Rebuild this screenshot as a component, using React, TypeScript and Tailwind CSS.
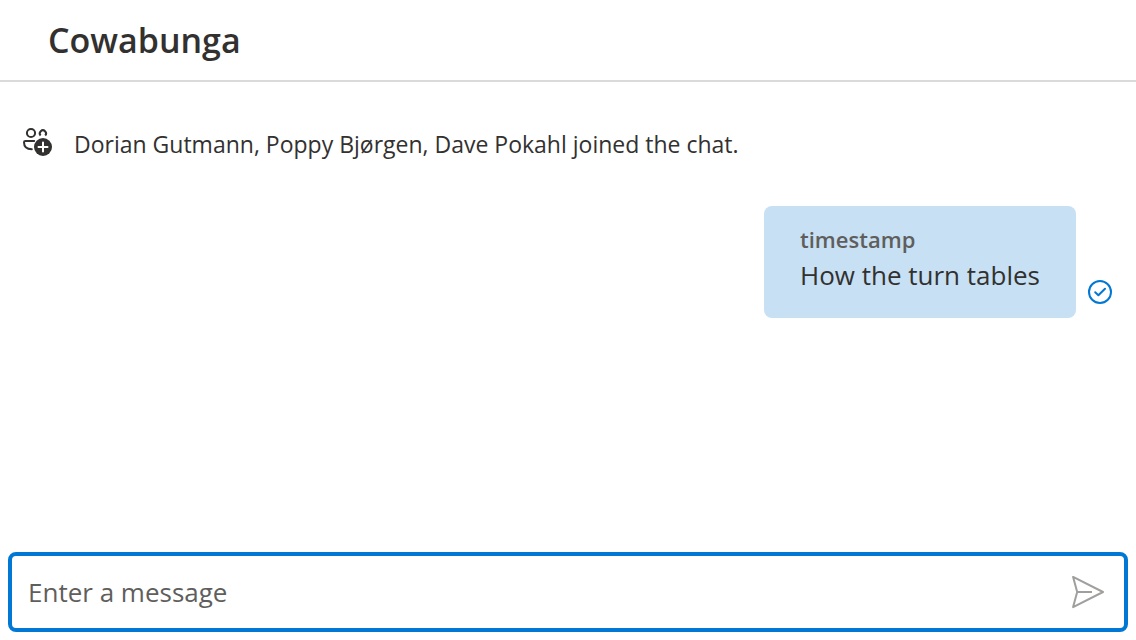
import { useState } from "react";

function PeopleAddIcon() {
  return (
    <svg viewBox="0 0 32 32" className="size-8 shrink-0" fill="none" aria-hidden="true">
      <g stroke="#323130" strokeWidth="2">
        <circle cx="9" cy="7" r="4.1" />
        <path d="M18.6 9.5A3.1 3.1 0 1 1 23.2 9.5" />
        <path d="M12.2 15H3.4C2.4 15 2 15.5 2 16.3C2 20.4 4.8 23.2 9.8 23.2" strokeLinecap="round" />
      </g>
      <circle cx="21" cy="21" r="9" fill="#323130" />
      <path d="M21 16.5V25.5M16.5 21H25.5" stroke="#fff" strokeWidth="2" strokeLinecap="round" />
    </svg>
  );
}

function SentIcon() {
  return (
    <svg viewBox="0 0 24 24" className="size-6 shrink-0" fill="none" stroke="#0078d4" strokeWidth="2" role="img" aria-label="Sent">
      <circle cx="12" cy="12" r="11" />
      <path d="M7.2 12.2L10.4 15.2L17 8.8" strokeLinecap="round" strokeLinejoin="round" />
    </svg>
  );
}

function SendIcon() {
  return (
    <svg viewBox="0 0 34 34" className="size-[34px]" fill="none" stroke="#a19f9d" strokeWidth="2" aria-hidden="true">
      <path d="M3.1 1.9L33 17L3.1 32.1L7.2 17ZM7.2 17H22" strokeLinejoin="round" />
    </svg>
  );
}

export default function App() {
  const [message, setMessage] = useState("");

  return (
    <div className="flex min-h-screen flex-col bg-white font-['Open_Sans','Noto_Sans',sans-serif] text-[#323130]">
      <header className="border-b-2 border-[#dadada] px-12 py-5">
        <h1 className="text-[34px] leading-10 font-semibold">Cowabunga</h1>
      </header>

      <main className="flex flex-1 flex-col gap-11 px-6 pt-11">
        <div className="-ml-0.5 flex items-start gap-5">
          <PeopleAddIcon />
          <p className="text-[23px] leading-9">Dorian Gutmann, Poppy Bjørgen, Dave Pokahl joined the chat.</p>
        </div>
        <div className="flex items-end justify-end gap-3">
          <div className="rounded-lg bg-[#c7e0f4] px-9 pt-4 pb-6">
            <p className="text-[22px] leading-[34px] font-semibold text-[#605e5c]">timestamp</p>
            <p className="text-[26px] leading-[38px]">How the turn tables</p>
          </div>
          <div className="pb-3.5">
            <SentIcon />
          </div>
        </div>
      </main>

      <form
        className="m-2 flex items-center rounded-lg border-4 border-[#0078d4] p-4"
        onSubmit={(event) => event.preventDefault()}
      >
        <input
          type="text"
          aria-label="Enter a message"
          placeholder="Enter a message"
          value={message}
          onChange={(event) => setMessage(event.target.value)}
          className="h-10 min-w-0 flex-1 bg-transparent text-[26px] outline-none placeholder:text-[#605e5c]"
        />
        <button type="submit" aria-label="Send message" className="mr-1">
          <SendIcon />
        </button>
      </form>
    </div>
  );
}
